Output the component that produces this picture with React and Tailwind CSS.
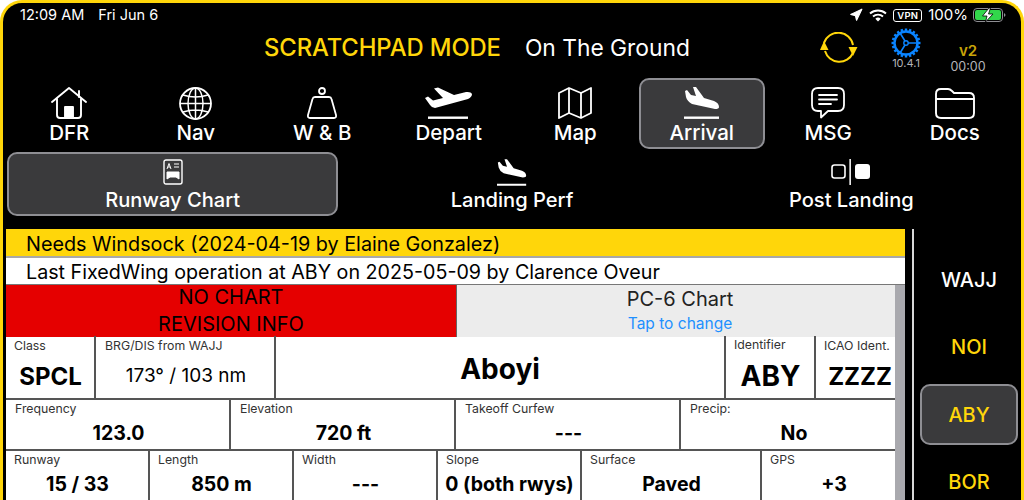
import React from 'react'
import { Navigation } from 'lucide-react'

const navItems = [
    { label: 'DFR', icon: <HomeIcon /> },
    { label: 'Nav', icon: <GlobeIcon /> },
    { label: 'W & B', icon: <WeightIcon /> },
    { label: 'Depart', icon: <DepartIcon /> },
    { label: 'Map', icon: <MapIcon /> },
    { label: 'Arrival', icon: <ArrivalIcon />, active: true },
    { label: 'MSG', icon: <MsgIcon /> },
    { label: 'Docs', icon: <FolderIcon /> },
]

const subTabs = [
    { label: 'Runway Chart', icon: <ChartIcon />, active: true },
    { label: 'Landing Perf', icon: <ArrivalIcon small /> },
    { label: 'Post Landing', icon: <PostIcon /> },
]

const sideItems = [
    { label: 'WAJJ', color: 'text-white' },
    { label: 'NOI', color: 'text-[#ffd60a]' },
    { label: 'ABY', color: 'text-[#ffd60a]', active: true },
    { label: 'BOR', color: 'text-[#ffd60a]' },
]

const row2 = [
    ['Frequency', '123.0'],
    ['Elevation', '720 ft'],
    ['Takeoff Curfew', '---'],
    ['Precip:', 'No'],
]

const row3 = [
    ['Runway', '15 / 33'],
    ['Length', '850 m'],
    ['Width', '---'],
    ['Slope', '0 (both rwys)'],
    ['Surface', 'Paved'],
    ['GPS', '+3'],
]

function HomeIcon() {
    return (
        <svg width="36" height="32" viewBox="0 0 36 32" fill="none" stroke="white" strokeWidth="1.9" strokeLinejoin="round" strokeLinecap="round">
            <path d="M1 15 L18 1 L35 15" />
            <path d="M6 12 V28 Q6 31 9 31 H27 Q30 31 30 28 V12" />
            <path d="M28 4 V10" />
            <path d="M14 31 V20 H22 V31 Z" fill="white" />
        </svg>
    )
}

function GlobeIcon() {
    return (
        <svg width="33" height="33" viewBox="0 0 33 33" fill="none" stroke="white" strokeWidth="1.5">
            <circle cx="16.5" cy="16.5" r="15.5" strokeWidth="1.8" />
            <ellipse cx="16.5" cy="16.5" rx="7.5" ry="15.5" />
            <path d="M16.5 1 V32 M1 16.5 H32 M4 8 Q16.5 12 29 8 M4 25 Q16.5 21 29 25" />
        </svg>
    )
}

function WeightIcon() {
    return (
        <svg width="30" height="32" viewBox="0 0 30 32" fill="none" stroke="white" strokeWidth="1.8" strokeLinejoin="round">
            <circle cx="15" cy="4" r="3" />
            <path d="M8 10 H22 Q24 10 24.5 12 L29 28 Q29.5 31 27 31 H3 Q0.5 31 1 28 L5.5 12 Q6 10 8 10 Z" />
        </svg>
    )
}

function DepartIcon() {
    return (
        <svg width="47" height="32" viewBox="0 0 47 32" fill="white">
            <path d="M0 11 L3 9.5 L8 13.5 L18 11 L9 1.5 L13 0.5 L29 8 L41 5 Q46 4.5 47 7 Q47 10 43 12 L10 21 Q7 21 5 18 Z" />
            <rect x="3" y="29.5" width="40" height="2.4" />
        </svg>
    )
}

function MapIcon() {
    return (
        <svg width="34" height="32" viewBox="0 0 34 32" fill="none" stroke="white" strokeWidth="1.8" strokeLinejoin="round">
            <path d="M1 6 L11 1 L23 6 L33 1 V26 L23 31 L11 26 L1 31 Z" />
            <path d="M11 1 V26 M23 6 V31" />
        </svg>
    )
}

function ArrivalIcon({ small }) {
    const w = small ? 30 : 36
    const h = small ? 27 : 32
    return (
        <svg width={w} height={h} viewBox="0 0 36 32" fill="white">
            <path d="M1 4 L3 3 L7 8 L12 9 L9 0 L12 0 L20 11 L30 14 Q35 16 35 20 Q35 22 31 22 L8 17 Q3 14 2 10 Z" />
            <rect x="0" y="29.5" width="35" height="2.4" />
        </svg>
    )
}

function MsgIcon() {
    return (
        <svg width="34" height="32" viewBox="0 0 34 32" fill="none" stroke="white" strokeWidth="1.8" strokeLinejoin="round" strokeLinecap="round">
            <path d="M7 1 H27 Q33 1 33 7 V18 Q33 24 27 24 H17 L10 30.5 V24 H7 Q1 24 1 18 V7 Q1 1 7 1 Z" />
            <path d="M8 8 H26 M8 12.5 H26 M8 17 H20" />
        </svg>
    )
}

function FolderIcon() {
    return (
        <svg width="40" height="31" viewBox="0 0 40 31" fill="none" stroke="white" strokeWidth="1.9" strokeLinejoin="round">
            <path d="M1 6 Q1 1 6 1 H13 Q15 1 17 3 L19 5 H34 Q39 5 39 10 V25 Q39 30 34 30 H6 Q1 30 1 25 Z" />
            <path d="M1 11 H39" />
        </svg>
    )
}

function ChartIcon() {
    return (
        <svg width="20" height="26" viewBox="0 0 20 26" fill="none" stroke="white" strokeWidth="1.4">
            <rect x="1" y="1" width="18" height="24" rx="2" />
            <path d="M4 10 L6 4.5 L8 10 M4.8 8 H7.2" strokeWidth="1" />
            <path d="M11 5 H16 M11 8 H16" strokeWidth="1.2" />
            <path d="M4 13 H16 V20 L13 18 H7 L4 20 Z" fill="white" strokeWidth="1" />
        </svg>
    )
}

function PostIcon() {
    return (
        <svg width="40" height="26" viewBox="0 0 40 26" fill="white">
            <rect x="1" y="6" width="13" height="13" rx="2.5" fill="none" stroke="white" strokeWidth="1.6" />
            <rect x="18.4" y="0" width="1.5" height="26" />
            <rect x="24" y="5" width="15" height="15" rx="3" />
        </svg>
    )
}

function SyncIcon() {
    return (
        <svg width="38" height="32" viewBox="0 0 38 32" fill="none" stroke="#ffd60a" strokeWidth="2">
            <path d="M4 11 A15 15 0 0 1 33 13" />
            <path d="M33 21 A15 15 0 0 1 5 19" />
            <path d="M4 9 L8.5 18 H0 Z" fill="#ffd60a" stroke="none" />
            <path d="M33 24 L28.5 15 H37.5 Z" fill="#ffd60a" stroke="none" />
        </svg>
    )
}

function GearIcon() {
    const teeth = Array.from({ length: 20 }, (_, i) => i * 18)
    return (
        <svg width="30" height="30" viewBox="0 0 30 30" fill="none" stroke="#0a84ff">
            {teeth.map((a) => (
                <rect key={a} x="13.8" y="0.5" width="2.4" height="3.5" fill="#0a84ff" stroke="none" transform={`rotate(${a} 15 15)`} />
            ))}
            <circle cx="15" cy="15" r="11.5" strokeWidth="2.4" />
            <circle cx="15" cy="15" r="2.2" strokeWidth="1.4" />
            <path d="M17 15 H26 M14 13 L9 5 M14 17 L9 25" strokeWidth="1.6" />
        </svg>
    )
}

function WifiIcon() {
    return (
        <svg width="18" height="13" viewBox="0 0 18 13" fill="none" stroke="white" strokeWidth="1.9">
            <path d="M1 4.5 A12 12 0 0 1 17 4.5" />
            <path d="M4 7.5 A7.5 7.5 0 0 1 14 7.5" />
            <path d="M9 12.5 L6.3 9.8 A4 4 0 0 1 11.7 9.8 Z" fill="white" stroke="none" />
        </svg>
    )
}

function BatteryIcon() {
    return (
        <svg width="33" height="14" viewBox="0 0 33 14" fill="none">
            <rect x="0.5" y="0.5" width="29" height="13" rx="3.5" stroke="#8e8e93" />
            <rect x="2" y="2" width="26" height="10" rx="2" fill="#32d74b" />
            <path d="M31 5 Q32.5 6 32.5 7 Q32.5 8 31 9 Z" fill="#8e8e93" />
            <path d="M16 0 L9.5 8 H14 L12.5 14 L20 6 H15.5 L17.5 0 Z" fill="white" stroke="black" strokeWidth="0.8" />
        </svg>
    )
}

function StatusBar() {
    return (
        <div className="flex h-[23px] items-center justify-between pt-[1px] pr-[15px] pl-[17px] text-[14.5px] text-white">
            <div className="flex gap-[14px]">
                <span>12:09 AM</span>
                <span>Fri Jun 6</span>
            </div>
            <div className="flex items-center gap-[5px]">
                <Navigation size={14} fill="white" stroke="white" className="mr-[1px]" />
                <WifiIcon />
                <span className="ml-[1px] rounded-[3px] border border-white px-[3px] text-[9.5px] leading-[11px] font-semibold tracking-wide">VPN</span>
                <span className="ml-[1px] text-[15px]">100%</span>
                <BatteryIcon />
            </div>
        </div>
    )
}

function TitleBar() {
    return (
        <div className="flex h-[44px] items-center">
            <div className="ml-[261px] flex w-[425px] items-center gap-[24px] whitespace-nowrap">
                <span className="text-[23.8px] font-medium tracking-[-0.1px] text-[#ffd60a]">SCRATCHPAD MODE</span>
                <span className="text-[22.8px] font-normal text-white">On The Ground</span>
            </div>
            <div className="ml-[131px]">
                <SyncIcon />
            </div>
            <div className="ml-[33px] flex w-[30px] flex-col items-center">
                <GearIcon />
                <span className="text-[11px] leading-[11px] text-[#b5b5b9]">10.4.1</span>
            </div>
            <div className="ml-[27px] flex w-[40px] flex-col items-center pt-[21px]">
                <span className="text-[15px] leading-[16px] font-semibold text-[#c9a408]">v2</span>
                <span className="text-[12.5px] leading-[16px] text-[#b5b5b9]">00:00</span>
            </div>
        </div>
    )
}

function NavRow() {
    return (
        <div className="mx-[3px] mt-[8px] grid h-[71px] grid-cols-8">
            {navItems.map((item) => (
                <div
                    key={item.label}
                    className={`flex flex-col items-center justify-end rounded-[10px] border-2 pb-[2px] ${
                        item.active ? 'border-[#8e8e93] bg-[#3a3a3c]' : 'border-transparent'
                    }`}
                >
                    <div className="flex h-[36px] items-center">{item.icon}</div>
                    <span className="text-[20.5px] leading-[24px] font-medium text-white">{item.label}</span>
                </div>
            ))}
        </div>
    )
}

function SubTabs() {
    return (
        <div className="mt-[3px] grid h-[64px] grid-cols-3">
            {subTabs.map((tab) => (
                <div
                    key={tab.label}
                    className={`flex flex-col items-center justify-end rounded-[10px] border-2 pb-[1px] ${
                        tab.active ? 'mr-[4px] ml-[4px] border-[#8e8e93] bg-[#3a3a3c]' : 'mx-[2px] border-transparent'
                    }`}
                >
                    <div className="flex h-[30px] items-center">{tab.icon}</div>
                    <span className="text-[20.1px] leading-[26px] font-medium text-white">{tab.label}</span>
                </div>
            ))}
        </div>
    )
}

function Cell({ label, value, className = '', labelClass = '', valueClass = 'pt-[3px] text-[19.5px] font-bold', border = true }) {
    return (
        <div className={`flex min-w-0 flex-col px-[7px] text-black ${border ? 'border-r-2 border-[#555]' : ''} ${className}`}>
            <span className={`h-[15px] text-[12.3px] leading-[17px] whitespace-nowrap text-[#333] ${labelClass}`}>{label}</span>
            <span className={`flex flex-1 items-center justify-center whitespace-nowrap ${valueClass}`}>{value}</span>
        </div>
    )
}

function Table() {
    return (
        <div className="relative w-[899px] bg-white">
            <div className="h-[29px] border-b-2 border-[#a8a8a8] bg-[#ffd60a] pl-[20px] text-[19.8px] leading-[30px] text-black">
                Needs Windsock (2024-04-19 by Elaine Gonzalez)
            </div>
            <div className="h-[27px] border-b border-[#777] pl-[20px] text-[19.7px] leading-[28px] text-black">
                Last FixedWing operation at ABY on 2025-05-09 by Clarence Oveur
            </div>
            <div className="grid h-[51px] grid-cols-[450px_1fr] border-b-2 border-[#555] text-center">
                <div className="bg-[#e50000] text-[20px] leading-[26.5px] text-black">
                    <div className="-mt-[1px]">NO CHART</div>
                    <div>REVISION INFO</div>
                </div>
                <div className="border-l border-[#666] bg-[#ececec] pr-[2px]">
                    <div className="text-[20px] leading-[29px] text-[#222]">PC-6 Chart</div>
                    <div className="text-[15.5px] leading-[20px] text-[#1e90ff]">Tap to change</div>
                </div>
            </div>
            <div className="grid h-[64px] grid-cols-[90px_180px_450px_90px_1fr] border-b-2 border-[#555]">
                <Cell label="Class" value="SPCL" labelClass="pt-[1px]" valueClass="pt-[5px] text-[24px] font-bold" className="pl-[8px]" />
                <Cell label="BRG/DIS from WAJJ" value="173° / 103 nm" labelClass="pt-[1px]" valueClass="pt-[3px] text-[19px] font-normal" className="pl-[9px]" />
                <Cell label="" value="Aboyi" valueClass="-mt-[12px] text-[28px] font-bold" />
                <Cell label="Identifier" value="ABY" valueClass="pt-[3px] text-[28px] font-bold" className="pl-[8px]" />
                <Cell label="ICAO Ident." value="ZZZZ" labelClass="pt-[1px]" valueClass="pt-[5px] text-[24px] font-bold" border={false} className="pr-[9px] pl-[8px]" />
            </div>
            <div className="grid h-[51px] grid-cols-[225px_225px_225px_1fr] border-b-2 border-[#555]">
                {row2.map(([label, value], i) => (
                    <Cell key={label} label={label} value={value} border={i < 3} className="pl-[9px]" />
                ))}
            </div>
            <div className="grid h-[50px] grid-cols-[144px_144px_144px_144px_180px_1fr]">
                {row3.map(([label, value], i) => (
                    <Cell key={label} label={label} value={value} border={i < 5} className="pl-[8px]" />
                ))}
            </div>
            {/* scroll bar sits on top of the table */}
            <div className="absolute top-[56px] right-0 bottom-0 w-[10px] bg-[#a9a9ae]" />
        </div>
    )
}

function SideList() {
    return (
        <div className="ml-[7px] flex-1 border-l-2 border-[#d8d8d8] pt-[20px] pr-[3px] pl-[6px]">
            {sideItems.map((item) => (
                <div
                    key={item.label}
                    className={`mb-[6.5px] flex h-[61px] items-center justify-center rounded-[10px] border-2 text-[20px] font-medium ${item.color} ${
                        item.active ? 'border-[#8e8e93] bg-[#3a3a3c]' : 'border-transparent'
                    }`}
                >
                    {item.label}
                </div>
            ))}
        </div>
    )
}

export default function App() {
    return (
        <div className="h-[500px] w-[1024px] overflow-hidden rounded-t-[22px] border-[3px] border-b-0 border-[#ffd60a] bg-black font-['Inter',sans-serif]">
            <StatusBar />
            <TitleBar />
            <NavRow />
            <SubTabs />
            <div className="mt-[13px] ml-[3px] flex">
                <Table />
                <SideList />
            </div>
        </div>
    )
}
